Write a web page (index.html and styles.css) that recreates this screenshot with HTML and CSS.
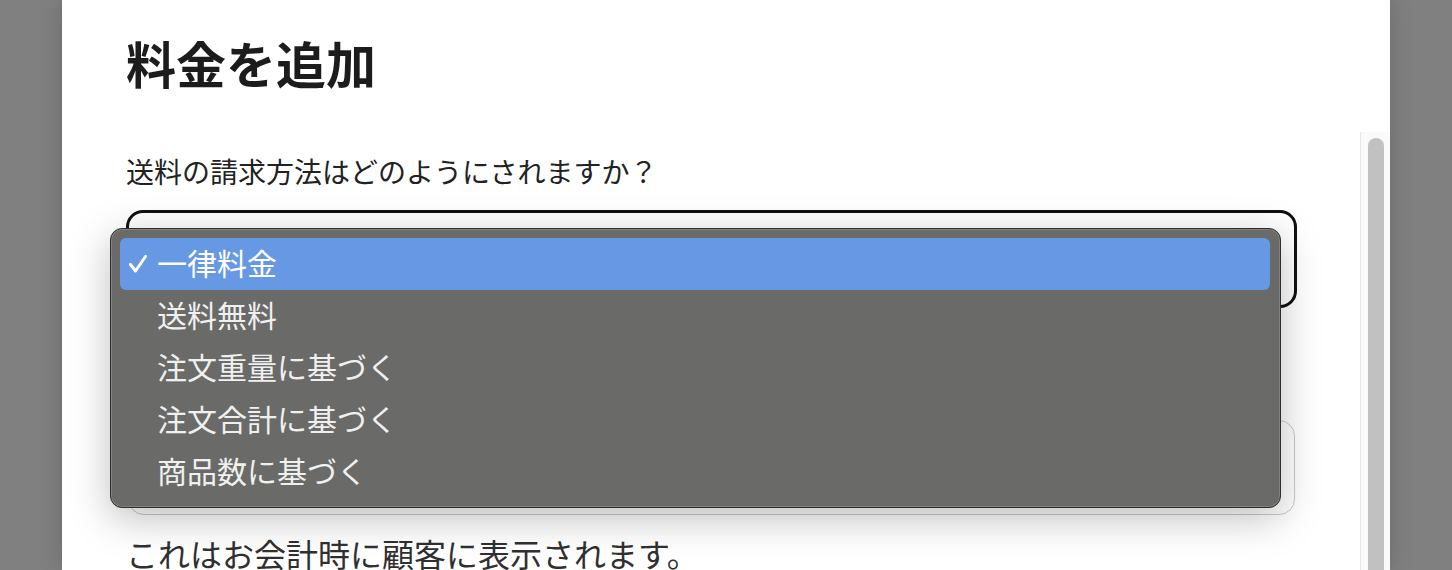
FILE: index.html
```html
<!DOCTYPE html>
<html lang="ja">
<head>
<meta charset="utf-8">
<title>料金を追加</title>
<link rel="stylesheet" href="styles.css">
</head>
<body>
<div class="modal">
  <header class="modal-header">
    <h1 class="title">料金を追加</h1>
  </header>
  <div class="modal-body">
    <div class="scroll-content">
      <div class="field">
        <label class="label">送料の請求方法はどのようにされますか？</label>
        <div class="select-wrap">
          <div class="select"></div>
          <ul class="menu">
            <li class="item selected"><svg class="check" viewBox="0 0 18 18"><polyline points="1.5,9.5 6.5,16 16.5,1.5"/></svg>一律料金</li>
            <li class="item">送料無料</li>
            <li class="item">注文重量に基づく</li>
            <li class="item">注文合計に基づく</li>
            <li class="item">商品数に基づく</li>
          </ul>
        </div>
      </div>
      <div class="field field-name">
        <div class="label-space"></div>
        <div class="input"></div>
        <p class="help">これはお会計時に顧客に表示されます。</p>
      </div>
    </div>
    <div class="scrollbar"><div class="thumb"></div></div>
  </div>
</div>
</body>
</html>
```
FILE: styles.css
```css
html, body {
  margin: 0;
  height: 100%;
  overflow: hidden;
}
body {
  background: #808080;
  font-family: "Noto Sans CJK JP", "Noto Sans", sans-serif;
}
.modal {
  width: 1328px;
  height: 570px;
  margin: 0 auto;
  background: #fff;
  display: flex;
  flex-direction: column;
  box-shadow: 0 0 22px rgba(0, 0, 0, 0.18);
}
.modal-header {
  flex: none;
  height: 132px;
  box-sizing: border-box;
  padding: 30px 64px 0 64px;
}
.title {
  margin: 0;
  font-size: 50px;
  line-height: 64px;
  font-weight: 700;
  color: #1c1c1c;
}
.modal-body {
  flex: 1;
  display: flex;
  min-height: 0;
}
.scroll-content {
  flex: 1;
  padding: 19px 63px 0 64px;
  overflow: hidden;
}
.scrollbar {
  flex: none;
  width: 30px;
  box-sizing: border-box;
  background: #fafafa;
  border-left: 1px solid #e6e6e6;
  padding: 6px 0 0 7px;
}
.thumb {
  width: 16px;
  height: 600px;
  background: #c1c1c1;
  border-radius: 8px;
}
.label {
  display: block;
  font-size: 28px;
  line-height: 40px;
  color: #222;
}
.label-space {
  height: 40px;
}
.select-wrap {
  position: relative;
  margin-top: 19px;
}
.select {
  height: 98px;
  box-sizing: border-box;
  border: 3px solid #111;
  border-radius: 17px;
  background: #fff;
}
.menu {
  position: absolute;
  left: -16px;
  top: 18px;
  width: 1171px;
  height: 280px;
  box-sizing: border-box;
  margin: 0;
  padding: 9px 10px 9px 9px;
  list-style: none;
  background: #6a6a69;
  border: 1px solid #2e2e2e;
  border-radius: 12px;
  box-shadow: inset 0 0 0 1px rgba(255, 255, 255, 0.16), 0 10px 40px rgba(0, 0, 0, 0.26);
  z-index: 2;
}
.item {
  position: relative;
  height: 52px;
  box-sizing: border-box;
  padding: 0 0 5px 37px;
  display: flex;
  align-items: center;
  font-size: 30px;
  color: #f0f0f0;
  border-radius: 6px;
}
.item.selected {
  background: #6698e3;
  color: #fff;
}
.check {
  position: absolute;
  left: 9px;
  top: 50%;
  width: 18px;
  height: 18px;
  margin-top: -9px;
  fill: none;
  stroke: #fff;
  stroke-width: 3;
  stroke-linecap: round;
  stroke-linejoin: round;
}
.field-name {
  margin-top: 54px;
}
.input {
  height: 95px;
  box-sizing: border-box;
  margin: 18px 2px 0 2px;
  border: 1.5px solid #c9c9c9;
  border-radius: 16px;
}
.help {
  margin: 16px 0 0 0;
  font-size: 32px;
  line-height: 44px;
  color: #303030;
}
```
